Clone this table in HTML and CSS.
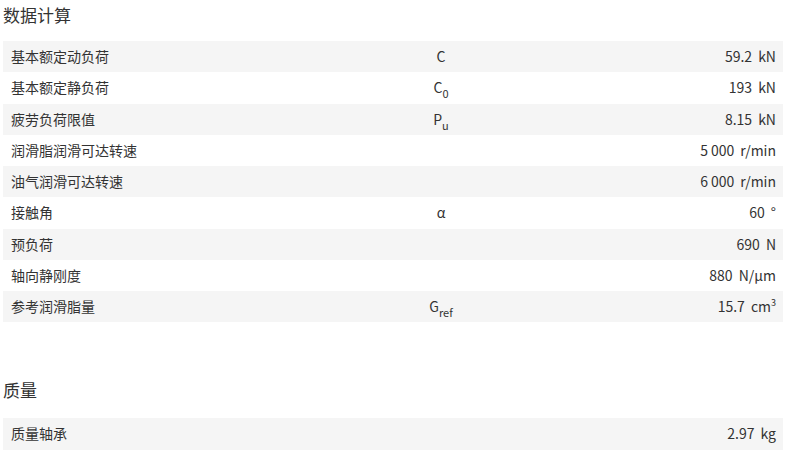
FILE: index.html
```html
<!DOCTYPE html>
<html lang="zh">
<head>
<meta charset="utf-8">
<link rel="stylesheet" href="styles.css">
</head>
<body>
<div class="page">
  <section class="group">
    <h2 class="title">数据计算</h2>
    <div class="table">
      <div class="row"><span class="label">基本额定动负荷</span><span class="sym">C</span><span class="val">59.2<span class="unit">kN</span></span></div>
      <div class="row"><span class="label">基本额定静负荷</span><span class="sym">C<sub>0</sub></span><span class="val">193<span class="unit">kN</span></span></div>
      <div class="row"><span class="label">疲劳负荷限值</span><span class="sym">P<sub>u</sub></span><span class="val">8.15<span class="unit">kN</span></span></div>
      <div class="row"><span class="label">润滑脂润滑可达转速</span><span class="sym"></span><span class="val">5&#8201;000<span class="unit">r/min</span></span></div>
      <div class="row"><span class="label">油气润滑可达转速</span><span class="sym"></span><span class="val">6&#8201;000<span class="unit">r/min</span></span></div>
      <div class="row"><span class="label">接触角</span><span class="sym">α</span><span class="val">60<span class="unit">°</span></span></div>
      <div class="row"><span class="label">预负荷</span><span class="sym"></span><span class="val">690<span class="unit">N</span></span></div>
      <div class="row"><span class="label">轴向静刚度</span><span class="sym"></span><span class="val">880<span class="unit">N/µm</span></span></div>
      <div class="row"><span class="label">参考润滑脂量</span><span class="sym">G<sub>ref</sub></span><span class="val">15.7<span class="unit">cm<sup>3</sup></span></span></div>
    </div>
  </section>
  <section class="group mass">
    <h2 class="title">质量</h2>
    <div class="table">
      <div class="row"><span class="label">质量轴承</span><span class="sym"></span><span class="val">2.97<span class="unit">kg</span></span></div>
    </div>
  </section>
</div>
</body>
</html>
```

FILE: styles.css
```css
* { box-sizing: border-box; }
html, body { margin: 0; padding: 0; background: #fff; }
body {
  font-family: "Noto Sans CJK SC", "Noto Sans", sans-serif;
  color: #333;
}
.page {
  width: 786px;
  padding: 0 3px;
}
.title {
  margin: 0;
  font-size: 17px;
  font-weight: 400;
  line-height: 30px;
  height: 41px;
  color: #333;
}
.table {
  display: flex;
  flex-direction: column;
}
.row {
  display: grid;
  grid-template-columns: 370px 120px 1fr;
  align-items: center;
  height: 31.25px;
  font-size: 14px;
  line-height: 19px;
  padding: 0 7px 0 8px;
}
.row:nth-child(odd) { background: #f5f5f5; }
.label { white-space: nowrap; }
.sym { text-align: center; }
.sym sub { font-size: 11px; vertical-align: -5px; line-height: 0; }
.val { text-align: right; white-space: nowrap; }
.unit { margin-left: 6px; }
.unit sup { font-size: 9px; vertical-align: 6px; line-height: 0; }
.mass { margin-top: 54px; }
.mass .title { height: 42px; line-height: 28px; }
```
